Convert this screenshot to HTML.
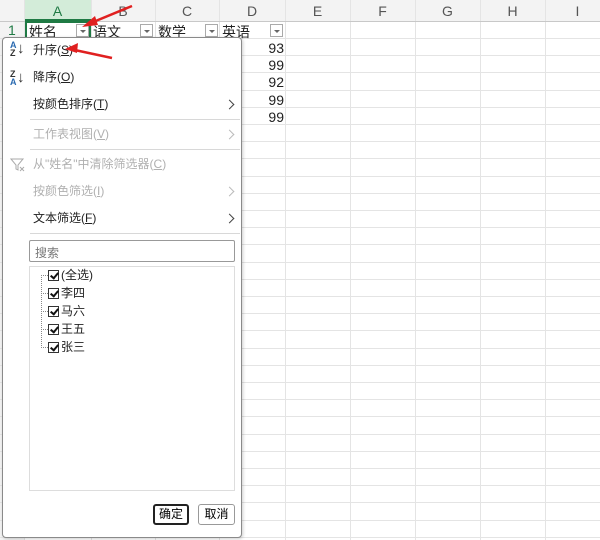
<!DOCTYPE html>
<html><head><meta charset="utf-8"><style>
*{margin:0;padding:0;box-sizing:border-box}
body{width:600px;height:540px;overflow:hidden;background:#fff;font-family:"Liberation Sans","Noto Sans CJK SC",sans-serif;position:relative}
.abs{position:absolute}
.vl{position:absolute;top:0;width:1px;height:540px;background:#e4e4e4}
.hl{position:absolute;left:0;width:600px;height:1px;background:#e4e4e4}
.ch{position:absolute;top:3px;font-size:14px;color:#555;text-align:center}
.mi{position:absolute;left:33px;font-size:12px;line-height:14px;color:#222}
.dis{color:#b0b0b0}
.arr{position:absolute;left:226px;width:10px;height:10px}
.arr:after{content:"";position:absolute;left:0;top:2px;width:6px;height:6px;border-right:1.3px solid #444;border-top:1.3px solid #444;transform:rotate(45deg)}
.arr.dis:after{border-color:#bbb}
.sep{position:absolute;left:30px;width:210px;height:1px;background:#d8d8d8}
.cb{position:absolute;left:48px;width:11px;height:11px;border:1px solid #333;background:#fff}
.cb:after{content:"";position:absolute;left:3px;top:0px;width:3px;height:6px;border-right:2px solid #111;border-bottom:2px solid #111;transform:rotate(40deg)}
.it{position:absolute;left:61px;font-size:12px;line-height:14px;color:#222}
.num{position:absolute;left:240px;width:44px;text-align:right;font-size:14px;color:#222}
.dd{position:absolute;top:24px;width:13px;height:13px;border:1px solid #aaa;background:#fff}
.dd:after{content:"";position:absolute;left:3px;top:5px;border-left:3px solid transparent;border-right:3px solid transparent;border-top:3px solid #666}
</style></head><body>
<div class="abs" style="left:0;top:0;width:600px;height:21px;background:#f3f3f3"></div>
<div class="abs" style="left:0;top:0;width:24px;height:540px;background:#f3f3f3"></div>
<div class="abs" style="left:24px;top:0;width:67px;height:21px;background:#d3ecd9;border-bottom:2px solid #1f7a44"></div>
<div class="vl" style="left:24px"></div><div class="vl" style="left:91px"></div><div class="vl" style="left:155px"></div><div class="vl" style="left:219px"></div><div class="vl" style="left:285px"></div><div class="vl" style="left:350px"></div><div class="vl" style="left:415px"></div><div class="vl" style="left:480px"></div><div class="vl" style="left:545px"></div>
<div class="hl" style="top:21px;background:#c8c8c8"></div>
<div class="hl" style="top:38px"></div><div class="hl" style="top:55px"></div><div class="hl" style="top:72px"></div><div class="hl" style="top:90px"></div><div class="hl" style="top:107px"></div><div class="hl" style="top:124px"></div><div class="hl" style="top:141px"></div><div class="hl" style="top:158px"></div><div class="hl" style="top:176px"></div><div class="hl" style="top:193px"></div><div class="hl" style="top:210px"></div><div class="hl" style="top:227px"></div><div class="hl" style="top:244px"></div><div class="hl" style="top:262px"></div><div class="hl" style="top:279px"></div><div class="hl" style="top:296px"></div><div class="hl" style="top:313px"></div><div class="hl" style="top:330px"></div><div class="hl" style="top:348px"></div><div class="hl" style="top:365px"></div><div class="hl" style="top:382px"></div><div class="hl" style="top:399px"></div><div class="hl" style="top:416px"></div><div class="hl" style="top:434px"></div><div class="hl" style="top:451px"></div><div class="hl" style="top:468px"></div><div class="hl" style="top:485px"></div><div class="hl" style="top:502px"></div><div class="hl" style="top:520px"></div><div class="hl" style="top:537px"></div>
<div class="ch" style="left:24px;width:67px;color:#1f7a44">A</div>
<div class="ch" style="left:91px;width:64px">B</div>
<div class="ch" style="left:155px;width:64px">C</div>
<div class="ch" style="left:219px;width:66px">D</div>
<div class="ch" style="left:285px;width:65px">E</div>
<div class="ch" style="left:350px;width:65px">F</div>
<div class="ch" style="left:415px;width:65px">G</div>
<div class="ch" style="left:480px;width:65px">H</div>
<div class="ch" style="left:545px;width:65px">I</div>
<div class="abs" style="left:8px;top:22px;font-size:14px;color:#1f7a44">1</div>
<div class="abs" style="left:25px;top:21px;width:66px;height:18px;border:2px solid #1f7a44"></div>
<div class="abs" style="left:29px;top:22px;font-size:14px;color:#222">姓名</div>
<div class="abs" style="left:93px;top:22px;font-size:14px;color:#222">语文</div>
<div class="abs" style="left:158px;top:22px;font-size:14px;color:#222">数学</div>
<div class="abs" style="left:222px;top:22px;font-size:14px;color:#222">英语</div>
<div class="dd" style="left:76px"></div><div class="dd" style="left:140px"></div><div class="dd" style="left:205px"></div><div class="dd" style="left:270px"></div>
<div class="num" style="top:40px">93</div><div class="num" style="top:57px">99</div><div class="num" style="top:74px">92</div><div class="num" style="top:92px">99</div><div class="num" style="top:109px">99</div>
<!-- menu -->
<div class="abs" style="left:2px;top:37px;width:240px;height:501px;background:#fff;border:1px solid #8a8a8a;border-radius:4px;box-shadow:1px 1px 3px rgba(0,0,0,.2)"></div>
<div class="abs" style="left:10px;top:41px;font-size:9px;line-height:8px;color:#2a6ab0;font-weight:bold">A<br><span style="color:#333">Z</span></div>
<div class="abs" style="left:17px;top:40px;font-size:15px;color:#333">↓</div>
<div class="mi" style="top:43px">升序(<u>S</u>)</div>
<div class="abs" style="left:10px;top:70px;font-size:9px;line-height:8px;color:#333;font-weight:bold">Z<br><span style="color:#2a6ab0">A</span></div>
<div class="abs" style="left:17px;top:69px;font-size:15px;color:#333">↓</div>
<div class="mi" style="top:70px">降序(<u>O</u>)</div>
<div class="mi" style="top:97px">按颜色排序(<u>T</u>)</div><div class="arr" style="top:99px"></div>
<div class="sep" style="top:119px"></div>
<div class="mi dis" style="top:127px">工作表视图(<u>V</u>)</div><div class="arr dis" style="top:129px"></div>
<div class="sep" style="top:149px"></div>
<svg class="abs" style="left:10px;top:157px" width="16" height="16"><path d="M1 2h12l-5 6v5l-2-1V8z" fill="none" stroke="#aaa"/><path d="M10 10l4 4M14 10l-4 4" stroke="#aaa"/></svg>
<div class="mi dis" style="top:157px">从"姓名"中清除筛选器(<u>C</u>)</div>
<div class="mi dis" style="top:184px">按颜色筛选(<u>I</u>)</div><div class="arr dis" style="top:186px"></div>
<div class="mi" style="top:211px">文本筛选(<u>F</u>)</div><div class="arr" style="top:213px"></div>
<div class="sep" style="top:233px"></div>
<div class="abs" style="left:29px;top:240px;width:206px;height:22px;border:1px solid #999;border-radius:2px;font-size:12px;color:#777;padding:3px 5px">搜索</div>
<div class="abs" style="left:29px;top:266px;width:206px;height:225px;border:1px solid #ddd"></div>
<div class="abs" style="left:41px;top:275px;width:1px;height:73px;border-left:1px dotted #888"></div>
<div class="abs" style="left:41px;top:275px;width:7px;border-top:1px dotted #888"></div>
<div class="abs" style="left:41px;top:293px;width:7px;border-top:1px dotted #888"></div>
<div class="abs" style="left:41px;top:311px;width:7px;border-top:1px dotted #888"></div>
<div class="abs" style="left:41px;top:329px;width:7px;border-top:1px dotted #888"></div>
<div class="abs" style="left:41px;top:347px;width:7px;border-top:1px dotted #888"></div>
<div class="cb" style="top:270px"></div><div class="it" style="top:268px">(全选)</div>
<div class="cb" style="top:288px"></div><div class="it" style="top:286px">李四</div>
<div class="cb" style="top:306px"></div><div class="it" style="top:304px">马六</div>
<div class="cb" style="top:324px"></div><div class="it" style="top:322px">王五</div>
<div class="cb" style="top:342px"></div><div class="it" style="top:340px">张三</div>
<div class="abs" style="left:153px;top:504px;width:36px;height:21px;border:2px solid #222;border-radius:3px;font-size:12px;text-align:center;line-height:17px">确定</div>
<div class="abs" style="left:198px;top:504px;width:37px;height:21px;border:1px solid #999;border-radius:3px;font-size:12px;text-align:center;line-height:19px">取消</div>
<!-- red arrows -->
<svg class="abs" style="left:0;top:0" width="300" height="130"><path d="M132 6L86 25" stroke="#e02020" stroke-width="2.5"/><path d="M82 27l13-11 3 9z" fill="#e02020"/><path d="M112 58L70 49" stroke="#e02020" stroke-width="2.5"/><path d="M65 49l13-6-1 10z" fill="#e02020"/></svg>
</body></html>
